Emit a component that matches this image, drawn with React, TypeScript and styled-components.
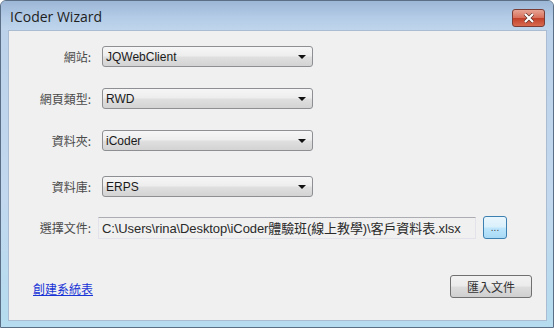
import styled, { createGlobalStyle } from 'styled-components'

const GlobalStyle = createGlobalStyle`
  html, body {
    margin: 0;
    padding: 0;
    background: #ffffff;
  }
  body {
    font-family: "Liberation Sans", "Noto Sans CJK TC", sans-serif;
  }
`

const Window = styled.div`
  width: 554px;
  height: 328px;
  box-sizing: border-box;
  display: flex;
  flex-direction: column;
  border: 1px solid #5a6f86;
  border-radius: 6px 6px 0 0;
  background: linear-gradient(180deg, #a6c0de 0px, #bcd2ea 30px, #c2d8ee 60%, #b5dcef 100%);
  overflow: hidden;
`

const TitleBar = styled.div`
  height: 29px;
  display: flex;
  align-items: center;
  justify-content: space-between;
  padding: 0 8px 0 9px;
  background: linear-gradient(180deg, #9cb6d6 0%, #b3cbe6 55%, #bfd5ec 100%);
`

const Title = styled.span`
  font-family: "Open Sans", "Noto Sans", sans-serif;
  font-size: 14px;
  color: #1e1e1e;
  margin-top: 2px;
`

const CloseButton = styled.div`
  width: 33px;
  height: 18px;
  margin-top: 4px;
  box-sizing: border-box;
  border: 1px solid #7a3c35;
  border-radius: 3px;
  background: linear-gradient(180deg, #e8a494 0%, #d8705c 48%, #c2402a 52%, #d86a50 100%);
  display: flex;
  align-items: center;
  justify-content: center;
`

const Client = styled.div`
  flex: 1;
  margin: 0 6px 6px 7px;
  background: #f0f0f0;
  border: 1px solid #a9bcd2;
  display: flex;
  flex-direction: column;
  padding-top: 15px;
`

const Row = styled.div<{ $gap: number }>`
  display: flex;
  align-items: center;
  margin-top: ${(p) => p.$gap}px;
`

const Label = styled.span`
  width: 82px;
  text-align: right;
  font-family: "Noto Sans CJK TC", sans-serif;
  font-size: 12px;
  color: #4a4a4a;
`

const Select = styled.div`
  margin-left: 11px;
  width: 211px;
  height: 21px;
  box-sizing: border-box;
  border: 1px solid #8d8f92;
  border-radius: 3px;
  background: linear-gradient(180deg, #f6f6f6 0%, #ededed 48%, #e0e0e0 52%, #d3d3d3 100%);
  display: flex;
  align-items: center;
  justify-content: space-between;
  padding: 0 6px 0 3px;
  font-size: 12px;
  color: #1a1a1a;
`

const Arrow = styled.span`
  width: 0;
  height: 0;
  border-left: 4px solid transparent;
  border-right: 4px solid transparent;
  border-top: 4px solid #111;
`

const PathBox = styled.div`
  margin-left: 7px;
  width: 378px;
  height: 22px;
  box-sizing: border-box;
  border: 1px solid #e2e3ea;
  border-top-color: #abadb3;
  background: #f0f0f0;
  display: flex;
  align-items: center;
  padding-left: 3px;
  font-family: "Liberation Sans", "Noto Sans CJK TC", sans-serif;
  font-size: 13px;
  letter-spacing: -0.1px;
  color: #2a2a2a;
  white-space: nowrap;
  overflow: hidden;
`

const BrowseButton = styled.div`
  margin-left: 7px;
  width: 24px;
  height: 23px;
  box-sizing: border-box;
  border: 1px solid #3c7fb1;
  border-radius: 3px;
  background: linear-gradient(180deg, #eaf6fd 0%, #d9f0fc 48%, #bee6fd 52%, #a7d9f5 100%);
  display: flex;
  align-items: flex-end;
  justify-content: center;
  padding-bottom: 5px;
  font-size: 10px;
  color: #444;
`

const Footer = styled.div`
  margin-top: auto;
  margin-bottom: 22px;
  display: flex;
  align-items: center;
  justify-content: space-between;
  padding: 0 14px 0 24px;
`

const Link = styled.a`
  font-family: "Noto Sans CJK TC", sans-serif;
  font-size: 12px;
  color: #1a35d6;
  text-decoration: underline;
  margin-top: 4px;
`

const ActionButton = styled.div`
  width: 82px;
  height: 23px;
  box-sizing: border-box;
  border: 1px solid #707070;
  border-radius: 3px;
  background: linear-gradient(180deg, #f2f2f2 0%, #ebebeb 48%, #dddddd 52%, #cfcfcf 100%);
  display: flex;
  align-items: center;
  justify-content: center;
  font-family: "Noto Sans CJK TC", sans-serif;
  font-size: 12px;
  color: #333;
`

const fields = [
  { label: '網站:', value: 'JQWebClient', gap: 0 },
  { label: '網頁類型:', value: 'RWD', gap: 21 },
  { label: '資料夾:', value: 'iCoder', gap: 21 },
  { label: '資料庫:', value: 'ERPS', gap: 25 },
]

const App = () => (
  <>
    <GlobalStyle />
    <Window>
      <TitleBar>
        <Title>ICoder Wizard</Title>
        <CloseButton>
          <svg width="12" height="10" viewBox="0 0 12 10">
            <path d="M2 1 L10 9 M10 1 L2 9" stroke="#5a2a22" strokeWidth="3.4" />
            <path d="M2 1 L10 9 M10 1 L2 9" stroke="#ffffff" strokeWidth="2.2" />
          </svg>
        </CloseButton>
      </TitleBar>
      <Client>
        {fields.map((f) => (
          <Row key={f.label} $gap={f.gap}>
            <Label>{f.label}</Label>
            <Select>
              {f.value}
              <Arrow />
            </Select>
          </Row>
        ))}
        <Row $gap={19}>
          <Label>選擇文件:</Label>
          <PathBox>C:\Users\rina\Desktop\iCoder體驗班(線上教學)\客戶資料表.xlsx</PathBox>
          <BrowseButton>...</BrowseButton>
        </Row>
        <Footer>
          <Link href="#">創建系統表</Link>
          <ActionButton>匯入文件</ActionButton>
        </Footer>
      </Client>
    </Window>
  </>
)

export default App
